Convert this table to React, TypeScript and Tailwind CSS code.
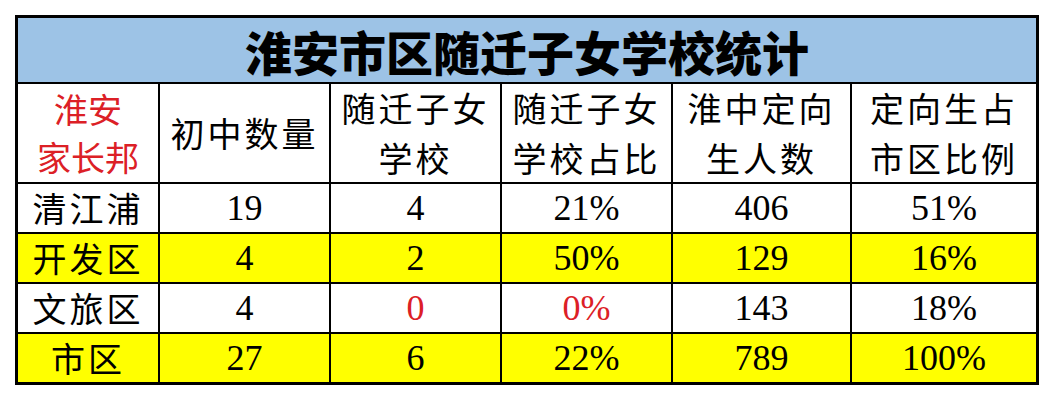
import React from "react";

type Row = { name: string; vals: string[]; yellow: boolean; red?: number[] };

const rows: Row[] = [
  { name: "清江浦", vals: ["19", "4", "21%", "406", "51%"], yellow: false },
  { name: "开发区", vals: ["4", "2", "50%", "129", "16%"], yellow: true },
  { name: "文旅区", vals: ["4", "0", "0%", "143", "18%"], yellow: false, red: [1, 2] },
  { name: "市区", vals: ["27", "6", "22%", "789", "100%"], yellow: true },
];

const headers: string[][] = [
  ["初中数量"],
  ["随迁子女", "学校"],
  ["随迁子女", "学校占比"],
  ["淮中定向", "生人数"],
  ["定向生占", "市区比例"],
];

export default function App() {
  return (
    <div className="w-[1056px] h-[400px] bg-white pt-[15px] pl-[15px] text-black font-[family-name:'Noto_Sans_CJK_SC',sans-serif]">
      <div className="w-[1024px] border-[3px] border-black">
        <div className="h-[66px] bg-[#9dc3e6] border-b-2 border-black flex items-center justify-center text-[47px] font-black leading-none">
          淮安市区随迁子女学校统计
        </div>
        <div className="grid grid-cols-[142px_171px_171px_171px_179px_184px] grid-rows-[100px_50px_50px_50px_48px]">
          <div className="border-r-2 border-b-2 border-black flex flex-col items-center justify-center text-[34px] leading-[48px] text-[#dc2026]">
            <span>淮安</span>
            <span>家长邦</span>
          </div>
          {headers.map((h, i) => (
            <div
              key={i}
              className={`border-b-2 border-black flex flex-col items-center justify-center text-[34px] leading-[50px] tracking-[3px] ${
                i < 4 ? "border-r-2" : ""
              }`}
            >
              {h.map((line) => (
                <span key={line}>{line}</span>
              ))}
            </div>
          ))}
          {rows.map((r, ri) => {
            const last = ri === rows.length - 1;
            const bg = r.yellow ? "bg-[#ffff00]" : "bg-white";
            return (
              <React.Fragment key={r.name}>
                <div
                  className={`${bg} border-r-2 border-black flex items-center justify-center text-[34px] leading-none tracking-[3px] ${
                    last ? "" : "border-b-2"
                  }`}
                >
                  {r.name}
                </div>
                {r.vals.map((v, i) => (
                  <div
                    key={i}
                    className={`${bg} border-black flex items-center justify-center text-[36px] leading-none font-[family-name:'Liberation_Serif',serif] ${
                      last ? "" : "border-b-2"
                    } ${i < 4 ? "border-r-2" : ""} ${
                      r.red && r.red.includes(i) ? "text-[#dc2026]" : ""
                    }`}
                  >
                    {v}
                  </div>
                ))}
              </React.Fragment>
            );
          })}
        </div>
      </div>
    </div>
  );
}
